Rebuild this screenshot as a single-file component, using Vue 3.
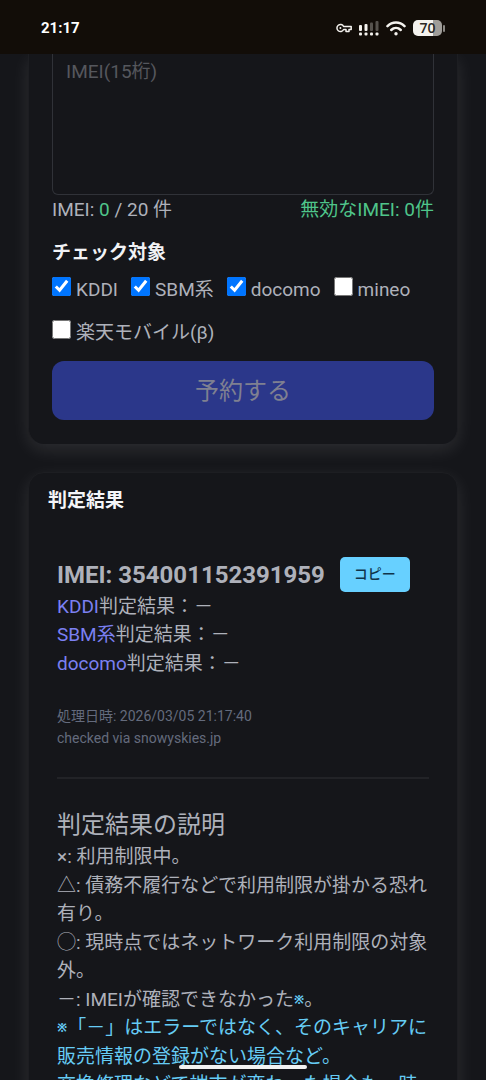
<script setup>
import { ref } from 'vue'

const imei = ref('')
const carriers = ref([
  { id: 'kddi', label: 'KDDI', checked: true },
  { id: 'sbm', label: 'SBM系', checked: true },
  { id: 'docomo', label: 'docomo', checked: true },
  { id: 'mineo', label: 'mineo', checked: false },
  { id: 'rakuten', label: '楽天モバイル(β)', checked: false },
])
const results = [
  { name: 'KDDI', value: '－' },
  { name: 'SBM系', value: '－' },
  { name: 'docomo', value: '－' },
]
</script>

<template>
  <div class="screen">
    <header class="status">
      <span class="clock">21:17</span>
      <div class="status-icons">
        <svg viewBox="0 0 16 10" width="16" height="10" fill="none" stroke="#f4f2ee" stroke-width="1.5">
          <path d="M7.6 3.5A3.5 3.5 0 1 0 7.6 6.5H10V8.6H13V6.5H15.2V3.5Z" stroke-linejoin="round" />
          <circle cx="4.4" cy="5" r="1" fill="#f4f2ee" stroke="none" />
        </svg>
        <svg viewBox="0 0 20 15" width="20" height="15" fill="#f4f2ee">
          <rect x="0" y="4" width="3" height="6" rx="1" />
          <rect x="5.5" y="3" width="3" height="7" rx="1" />
          <rect x="11" y="1.5" width="3" height="8.5" rx="1" opacity="0.3" />
          <rect x="16.5" y="0" width="3" height="10" rx="1" opacity="0.3" />
          <rect x="0" y="11.5" width="3" height="3" rx="1" />
          <rect x="5.5" y="11.5" width="3" height="3" rx="1" />
          <rect x="11" y="11.5" width="3" height="3" rx="1" />
          <rect x="16.5" y="11.5" width="3" height="3" rx="1" />
        </svg>
        <svg viewBox="0 0 20 15" width="20" height="15" fill="none" stroke="#f4f2ee" stroke-width="2.5" stroke-linecap="round">
          <path d="M1.5 5.2C6.3 0.3 13.7 0.3 18.5 5.2" />
          <path d="M5.2 9C8 6.3 12 6.3 14.8 9" />
          <circle cx="10" cy="12.8" r="1.7" fill="#f4f2ee" stroke="none" />
        </svg>
        <span class="battery"><span class="cell">70</span><span class="tip"></span></span>
      </div>
    </header>

    <main class="page">
      <section class="card form-card">
        <textarea v-model="imei" class="imei-box" placeholder="IMEI(15桁)" aria-label="IMEI"></textarea>
        <div class="counts">
          <span>IMEI: <span class="ok">0</span> / 20 件</span>
          <span class="ok">無効なIMEI: 0件</span>
        </div>
        <h2 class="label-title">チェック対象</h2>
        <div class="checks">
          <label v-for="c in carriers" :key="c.id" class="check" :for="c.id">
            <input :id="c.id" v-model="c.checked" type="checkbox" />
            <span>{{ c.label }}</span>
          </label>
        </div>
        <button class="reserve" type="button" disabled>予約する</button>
      </section>

      <section class="card result-card">
        <h2 class="result-title">判定結果</h2>
        <div class="result-body">
          <div class="imei-row">
            <h3 class="imei-number">IMEI: 354001152391959</h3>
            <button class="copy" type="button">コピー</button>
          </div>
          <p v-for="r in results" :key="r.name" class="line">
            <span class="carrier">{{ r.name }}</span>判定結果：{{ r.value }}
          </p>
          <p class="meta">処理日時: 2026/03/05 21:17:40<br />checked via snowyskies.jp</p>
          <hr class="rule" />
          <h3 class="explain-title">判定結果の説明</h3>
          <p class="line">×: 利用制限中。</p>
          <p class="line">△: 債務不履行などで利用制限が掛かる恐れ有り。</p>
          <p class="line">◯: 現時点ではネットワーク利用制限の対象外。</p>
          <p class="line">－: IMEIが確認できなかった<span class="note mark">※</span>。</p>
          <p class="line note">
            <span class="mark">※</span>「－」はエラーではなく、そのキャリアに販売情報の登録がない場合など。<br />交換修理などで端末が変わった場合も一時
          </p>
        </div>
      </section>
    </main>
    <div class="home-bar"></div>
  </div>
</template>

<style>
html,
body {
  background: #15161a;
}
</style>

<style scoped>
* {
  box-sizing: border-box;
}
.screen {
  position: relative;
  display: flex;
  flex-direction: column;
  height: 100vh;
  overflow: hidden;
  background: #15161a;
  color: #aeb1ba;
  font-family: Roboto, "Noto Sans CJK JP", sans-serif;
  font-size: 19px;
  line-height: 1.5;
}
h2,
h3,
p {
  margin: 0;
}
.status {
  display: flex;
  flex: none;
  align-items: center;
  justify-content: space-between;
  height: 54px;
  padding: 2px 41px 0;
  background: #120d08;
  color: #ffffff;
}
.clock {
  font-size: 15px;
  font-weight: 700;
}
.status-icons {
  display: flex;
  align-items: center;
  gap: 7px;
}
.battery {
  display: flex;
  align-items: center;
  gap: 1px;
}
.cell {
  width: 29px;
  height: 16px;
  border-radius: 5px;
  background: linear-gradient(90deg, #f4f2ee 70%, #a09d99 70%);
  color: #2b2825;
  font-family: "Open Sans", sans-serif;
  font-size: 14px;
  font-weight: 600;
  line-height: 16px;
  text-align: center;
}
.tip {
  width: 2px;
  height: 7px;
  border-radius: 1px;
  background: #8a8783;
}
.page {
  display: flex;
  flex: 1;
  flex-direction: column;
  gap: 28px;
  min-height: 0;
  padding: 0 28px;
  overflow: hidden;
}
.card {
  flex: none;
  border: 1px solid #1d1e22;
  border-radius: 16px;
  background: #15161a;
  box-shadow: 0 6px 18px rgba(255, 255, 255, 0.1);
}
.form-card {
  padding: 0 23px 24px;
  border-top: 0;
  border-bottom: 0;
  border-radius: 0 0 16px 16px;
}
.imei-box {
  display: block;
  width: 100%;
  height: 141px;
  padding: 4px 13px;
  border: 1px solid #303238;
  border-top: 0;
  border-radius: 0 0 6px 6px;
  outline: 0;
  background: transparent;
  color: #aeb1ba;
  font: inherit;
  resize: none;
}
.imei-box::placeholder {
  color: #55575d;
}
.counts {
  display: flex;
  justify-content: space-between;
  margin-top: 1px;
}
.ok {
  color: #4fc58a;
}
.label-title {
  margin-top: 14px;
  color: #f1f2f5;
  font-size: 19px;
  font-weight: 700;
}
.checks {
  display: flex;
  flex-wrap: wrap;
  gap: 15px 13px;
  margin-top: 9px;
}
.check {
  display: flex;
  gap: 5px;
  align-items: flex-start;
  height: 28px;
}
.check input {
  width: 19px;
  height: 19px;
  margin: 1px 0 0;
}
.reserve {
  display: block;
  width: 100%;
  height: 59px;
  margin-top: 14px;
  padding: 0 0 5px;
  border: 0;
  border-radius: 12px;
  background: #2b378a;
  color: #7f8091;
  font-family: inherit;
  font-size: 24px;
}
.result-card {
  padding: 14px 19px 24px;
}
.result-title {
  color: #f4f5f8;
  font-size: 19px;
  font-weight: 700;
}
.result-body {
  padding: 41px 9px 0;
}
.imei-row {
  display: flex;
  align-items: center;
  gap: 15px;
}
.imei-number {
  font-size: 24px;
  font-weight: 700;
}
.copy {
  height: 35px;
  padding: 0 14px 4px;
  border: 0;
  border-radius: 5px;
  background: #67d0ff;
  color: #10344a;
  font-family: inherit;
  font-size: 14px;
  font-weight: 500;
}
.carrier {
  color: #7b80f2;
}
.meta {
  margin-top: 27px;
  color: #646b7d;
  font-size: 14px;
  line-height: 22px;
}
.rule {
  height: 2px;
  margin: 28px 0;
  border: 0;
  background: #222327;
}
.explain-title {
  font-size: 24px;
  font-weight: 400;
}
.note {
  color: #66ccf5;
}
.mark {
  font-family: "Noto Sans", "Open Sans", Inter, sans-serif;
  font-size: 12px;
  font-weight: 700;
  line-height: 1;
  vertical-align: 2px;
}
.home-bar {
  position: absolute;
  bottom: 11px;
  left: 50%;
  width: 128px;
  height: 4px;
  margin-left: -64px;
  border-radius: 2px;
  background: #f2f2f2;
}
</style>
